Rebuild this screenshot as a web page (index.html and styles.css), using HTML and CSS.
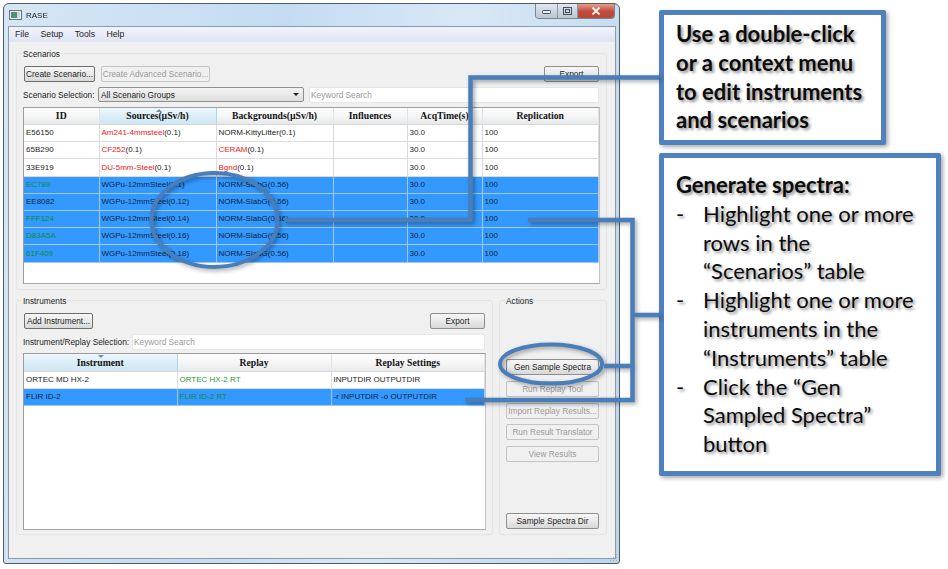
FILE: index.html
```html
<!DOCTYPE html>
<html lang="en">
<head>
  <meta charset="UTF-8"/>
  <title>RASE</title>
  <link rel="stylesheet" href="styles.css">
</head>
<body>
<div class="page">
  <div class="window">
    <div class="titlebar">
      <svg class="app-icon" width="13" height="10" viewBox="0 0 13 10">
        <rect x="0.5" y="0.5" width="12" height="9" fill="#e8eef0" stroke="#6b7478"/>
        <rect x="2" y="2" width="6" height="6" fill="#4f8f78"/>
        <rect x="8" y="2" width="3" height="6" fill="#cfd8dc"/>
      </svg>
      <span class="app-name">RASE</span>
      <div class="controls">
        <span class="ctl ctl-min"><svg width="10" height="6" viewBox="0 0 10 6"><rect x="0.5" y="2.5" width="8" height="3" rx="1" fill="#e8eef4" stroke="#46505a"/></svg></span>
        <span class="ctl ctl-max"><svg width="10" height="8" viewBox="0 0 10 8"><rect x="0.5" y="0.5" width="8" height="7" fill="none" stroke="#46505a"/><rect x="2.5" y="2.5" width="4" height="3" fill="none" stroke="#46505a"/></svg></span>
        <span class="ctl ctl-close"><svg width="10" height="8" viewBox="0 0 10 8"><path d="M1.5 0.5 L8.5 7.5 M8.5 0.5 L1.5 7.5" stroke="#f4f0ee" stroke-width="2"/></svg></span>
      </div>
    </div>

    <div class="client">
      <div class="menubar">
        <span>File</span><span>Setup</span><span>Tools</span><span>Help</span>
      </div>

      <div class="panels">
        <fieldset class="group group-scenarios">
          <legend>Scenarios</legend>
          <div class="row-buttons">
            <button class="btn btn-focus btn-create">Create Scenario...</button>
            <button class="btn btn-off btn-advanced">Create Advanced Scenario...</button>
            <button class="btn btn-export">Export</button>
          </div>
          <div class="row-filter">
            <label>Scenario Selection:</label>
            <div class="combo"><span>All Scenario Groups</span><i class="combo-arrow"></i></div>
            <div class="search">Keyword Search</div>
          </div>
          <div class="table-frame frame-scenarios">
            <table class="grid">
              <colgroup>
                <col class="sc-id"><col class="sc-src"><col class="sc-bg"><col class="sc-inf"><col class="sc-acq"><col>
              </colgroup>
              <thead>
                <tr><th>ID</th><th class="sorted"><i class="sort-up"></i>Sources(µSv/h)</th><th>Backgrounds(µSv/h)</th><th>Influences</th><th>AcqTime(s)</th><th>Replication</th></tr>
              </thead>
              <tbody>
                <tr><td>E56150</td><td><span class="red">Am241-4mmsteel</span>(0.1)</td><td>NORM-KittyLitter(0.1)</td><td></td><td>30.0</td><td>100</td></tr>
                <tr><td>65B290</td><td><span class="red">CF252</span>(0.1)</td><td><span class="red">CERAM</span>(0.1)</td><td></td><td>30.0</td><td>100</td></tr>
                <tr class="tall"><td>33E919</td><td><span class="red">DU-5mm-Steel</span>(0.1)</td><td><span class="red">Bgnd</span>(0.1)</td><td></td><td>30.0</td><td>100</td></tr>
                <tr class="sel"><td class="green">EC789</td><td>WGPu-12mmSteel(0.1)</td><td>NORM-SlabG(0.56)</td><td></td><td>30.0</td><td>100</td></tr>
                <tr class="sel"><td>EE8082</td><td>WGPu-12mmSteel(0.12)</td><td>NORM-SlabG(0.56)</td><td></td><td>30.0</td><td>100</td></tr>
                <tr class="sel"><td class="green">FFF124</td><td>WGPu-12mmSteel(0.14)</td><td>NORM-SlabG(0.56)</td><td></td><td>30.0</td><td>100</td></tr>
                <tr class="sel"><td class="green">D83A5A</td><td>WGPu-12mmSteel(0.16)</td><td>NORM-SlabG(0.56)</td><td></td><td>30.0</td><td>100</td></tr>
                <tr class="sel tall"><td class="green">61F409</td><td>WGPu-12mmSteel(0.18)</td><td>NORM-SlabG(0.56)</td><td></td><td>30.0</td><td>100</td></tr>
              </tbody>
            </table>
          </div>
        </fieldset>

        <div class="lower">
          <fieldset class="group group-instruments">
            <legend>Instruments</legend>
            <div class="row-buttons">
              <button class="btn btn-focus btn-add">Add Instrument...</button>
              <button class="btn btn-export">Export</button>
            </div>
            <div class="row-filter">
              <label>Instrument/Replay Selection:</label>
              <div class="search">Keyword Search</div>
            </div>
            <div class="table-frame frame-instruments">
              <table class="grid">
                <colgroup><col class="in-name"><col class="in-replay"><col></colgroup>
                <thead>
                  <tr><th class="sorted"><i class="sort-down"></i>Instrument</th><th>Replay</th><th>Replay Settings</th></tr>
                </thead>
                <tbody>
                  <tr><td>ORTEC MD HX-2</td><td class="green">ORTEC HX-2 RT</td><td>INPUTDIR OUTPUTDIR</td></tr>
                  <tr class="sel"><td>FLIR ID-2</td><td class="green">FLIR ID-2 RT</td><td>-r INPUTDIR -o OUTPUTDIR</td></tr>
                </tbody>
              </table>
            </div>
          </fieldset>

          <fieldset class="group group-actions">
            <legend>Actions</legend>
            <div class="actions">
              <button class="btn">Gen Sample Spectra</button>
              <button class="btn btn-off">Run Replay Tool</button>
              <button class="btn btn-off">Import Replay Results...</button>
              <button class="btn btn-off">Run Result Translator</button>
              <button class="btn btn-off">View Results</button>
              <button class="btn btn-dir">Sample Spectra Dir</button>
            </div>
          </fieldset>
        </div>
      </div>
    </div>
    <svg class="grip" width="8" height="8" viewBox="0 0 8 8" fill="#a9b0b6">
      <rect x="6" y="0" width="1" height="1"/><rect x="3" y="3" width="1" height="1"/><rect x="6" y="3" width="1" height="1"/>
      <rect x="0" y="6" width="1" height="1"/><rect x="3" y="6" width="1" height="1"/><rect x="6" y="6" width="1" height="1"/>
    </svg>
  </div>

  <div class="callouts">
    <div class="callout callout-edit">
      Use a double-click<br>or a context menu<br>to edit instruments<br>and scenarios
    </div>
    <div class="callout callout-gen">
      <p class="callout-head">Generate spectra:</p>
      <ul>
        <li><span class="dash">-</span><span>Highlight one or more<br>rows in the<br>“Scenarios” table</span></li>
        <li><span class="dash">-</span><span>Highlight one or more<br>instruments in the<br>“Instruments” table</span></li>
        <li><span class="dash">-</span><span>Click the “Gen<br>Sampled Spectra”<br>button</span></li>
      </ul>
    </div>
  </div>

  <!-- connector lines and the two rings drawn on top of the screenshot -->
  <svg class="overlay" width="948" height="569" viewBox="0 0 948 569" fill="none" stroke="#4a7ebb">
    <ellipse cx="214.5" cy="220" rx="63" ry="47" stroke-width="4"/>
    <ellipse cx="551" cy="364" rx="51" ry="19.5" stroke-width="4"/>
    <path d="M659 77.5 H470.5 V220 H284" stroke-width="4.5"/>
    <path d="M528 220 H632.5 V400 H465" stroke-width="4.5"/>
    <path d="M604 366 H632 M632 315 H659" stroke-width="4.5"/>
  </svg>
</div>
</body>
</html>
```

FILE: styles.css
```css
html, body {
    margin: 0;
    padding: 0;
    background: #ffffff;
}

.page {
    position: relative;
    width: 948px;
    height: 569px;
    overflow: hidden;
    font-family: "Liberation Sans", sans-serif;
    font-size: 8.3px;
    color: #1c1c1c;
}

/* window frame */
.window {
    position: absolute;
    left: 3px;
    top: 3px;
    width: 617px;
    height: 561px;
    display: flex;
    flex-direction: column;
    padding: 0 3px 4px 4px;
    box-sizing: border-box;
    border: 1px solid #555a60;
    border-radius: 6px 6px 3px 3px;
    background: linear-gradient(100deg, #d6e6f4 0%, #c4dcf2 40%, #d8e8f6 65%, #bcd6ee 100%);
    filter: blur(0.3px);
}

.titlebar {
    height: 22px;
    flex: none;
    display: flex;
    align-items: center;
    font-size: 8px;
    color: #222;
}

.app-icon {
    margin: 0 4px 0 1px;
}

.controls {
    display: flex;
    align-self: flex-start;
    margin-left: auto;
    margin-right: 1px;
    height: 14px;
    border: 1px solid #7a8590;
    border-top: none;
    border-radius: 0 0 4px 4px;
    overflow: hidden;
}

.ctl {
    display: flex;
    align-items: center;
    justify-content: center;
    height: 14px;
    width: 21px;
    border-right: 1px solid #8e98a2;
    background: linear-gradient(#dfe8f1, #b9c6d3);
}

.ctl-max {
    width: 19px;
}

.ctl-close {
    width: 36px;
    border-right: none;
    background: linear-gradient(#e0a090, #c1493a 55%, #b84838);
}

.client {
    flex: 1;
    display: flex;
    flex-direction: column;
    background: #f0f0f0;
    border: 1px solid #8d99a5;
    min-height: 0;
}

.menubar {
    height: 14px;
    flex: none;
    display: flex;
    align-items: center;
    gap: 11.5px;
    padding-left: 6px;
    font-size: 8.7px;
    background: linear-gradient(#f2f4fb, #dfe4f4);
    border-bottom: 1px solid #e4e4ec;
}

.panels {
    flex: 1;
    display: flex;
    flex-direction: column;
    gap: 10px;
    padding: 11px 8px 23px 7px;
    min-height: 0;
}

/* group boxes */
.group {
    margin: 0;
    padding: 0;
    position: relative;
    border: 1px solid #e4e4e4;
    border-radius: 3px;
    box-sizing: border-box;
    min-width: 0;
}

.group legend {
    position: absolute;
    top: -5px;
    left: 5px;
    padding: 0 1px;
    line-height: 10px;
    background: #f0f0f0;
}

.group-scenarios {
    height: 237px;
    flex: none;
    padding: 12px 6px 6px;
}

.lower {
    flex: 1;
    display: flex;
    gap: 6px;
    min-height: 0;
}

.group-instruments {
    width: 477px;
    flex: none;
    padding: 12px 6px 5px;
}

.group-actions {
    flex: 1;
    padding: 58px 7px 6px 6px;
}

.row-buttons {
    display: flex;
    gap: 6px;
    height: 16px;
    margin: 0 1px;
}

.row-filter {
    display: flex;
    align-items: center;
    height: 15px;
    margin: 5px 1px 0 0;
    white-space: nowrap;
}

.row-filter label {
    width: 75px;
    flex: none;
}

.group-instruments .row-filter label {
    width: 109px;
}

/* buttons */
.btn {
    height: 16px;
    padding: 0;
    font: inherit;
    color: #1c1c1c;
    white-space: nowrap;
    border: 1px solid #8f8f8f;
    border-radius: 2px;
    background: linear-gradient(#f6f6f6 0%, #eaeaea 50%, #d8d8d8 100%);
    box-sizing: border-box;
}

.btn-off {
    color: #9a9a9a;
    border-color: #c4c4c4;
    background: #f0f0f0;
}

.btn-focus {
    border-color: #6e6e6e;
}

.btn-create {
    width: 71px;
}

.btn-advanced {
    width: 109px;
}

.btn-add {
    width: 69px;
}

.btn-export {
    width: 55px;
    margin-left: auto;
}

.combo {
    width: 206px;
    height: 15px;
    flex: none;
    display: flex;
    align-items: center;
    justify-content: space-between;
    padding: 0 2px;
    box-sizing: border-box;
    border: 1px solid #8f8f8f;
    border-radius: 2px;
    background: linear-gradient(#f4f4f4, #dedede);
}

.combo-arrow {
    width: 0;
    height: 0;
    margin-right: 2px;
    border-left: 3px solid transparent;
    border-right: 3px solid transparent;
    border-top: 3px solid #222;
}

.search {
    flex: 1;
    height: 14px;
    line-height: 14px;
    margin-left: 5px;
    padding-left: 1px;
    color: #9a9a9a;
    background: #fff;
    border: 1px solid #e6e6e6;
    border-radius: 2px;
}

.group-instruments .search {
    margin-left: 0;
}

/* tables */
.table-frame {
    margin-top: 5px;
    background: #fff;
    border: 1px solid #9c9c9c;
    border-right-color: #c4c4c4;
    border-bottom-color: #a8a8a8;
    box-sizing: border-box;
    height: 177px;
}

.frame-instruments {
    margin-top: 4px;
}

.grid {
    width: 100%;
    border-collapse: collapse;
    table-layout: fixed;
}

.grid th {
    position: relative;
    height: 16px;
    padding: 0;
    font-family: "Liberation Serif", serif;
    font-size: 9.7px;
    font-weight: bold;
    color: #111;
    background: linear-gradient(#fdfdfd, #f6f6f6 50%, #e6e8ea);
    border-right: 1px solid #dfe3e6;
    border-bottom: 1px solid #d8d8d8;
    box-sizing: border-box;
}

.frame-instruments th {
    height: 17px;
}

.grid th.sorted {
    background: linear-gradient(#eef7fc, #d8ebf6 60%, #d0e6f3);
    border-right-color: #a8d8f0;
}

.sort-up, .sort-down {
    position: absolute;
    left: 50%;
    top: 1px;
    margin-left: -2px;
    width: 0;
    height: 0;
    border-left: 3px solid transparent;
    border-right: 3px solid transparent;
}

.sort-up {
    border-bottom: 3px solid #6d93ad;
}

.sort-down {
    border-top: 3px solid #6d93ad;
}

.grid td {
    height: 17px;
    padding: 0 2px;
    font-size: 8px;
    overflow: hidden;
    white-space: nowrap;
    box-sizing: border-box;
    border-right: 1px solid #dcdcdc;
    border-bottom: 1px solid #dcdcdc;
}

.grid tr.tall td {
    height: 18px;
}

.grid tr.sel td {
    background: #3399ff;
    color: #10243c;
    border-color: #a0c8ee;
}

.grid td.green {
    color: #1f9a38;
}

.grid tr.sel td.green {
    color: #0f8a3c;
}

.red {
    color: #f01818;
}

.sc-id { width: 75px; }
.sc-src { width: 117px; }
.sc-bg { width: 117px; }
.sc-inf { width: 74px; }
.sc-acq { width: 75px; }

.in-name { width: 153px; }
.in-replay { width: 154px; }

.actions {
    display: flex;
    flex-direction: column;
    gap: 5.75px;
    height: 170px;
}

.actions .btn {
    height: 16px;
}

.actions .btn-dir {
    margin-top: auto;
}

.grip {
    position: absolute;
    right: 1px;
    bottom: 1px;
}

/* annotation boxes */
.callouts {
    position: absolute;
    left: 659px;
    top: 10px;
    display: flex;
    flex-direction: column;
    gap: 8px;
    font-family: Lato, sans-serif;
    font-size: 22px;
    line-height: 28.8px;
    color: #0c0c0c;
    text-shadow: 2px 2px 3px rgba(0, 0, 0, 0.45);
}

.callout {
    background: #fff;
    border: 5px solid #4f81bd;
    border-radius: 2px;
    box-sizing: border-box;
    box-shadow: 2px 2px 4px rgba(0, 0, 0, 0.35);
    padding-left: 12px;
    white-space: nowrap;
}

.callout-edit {
    width: 227px;
    height: 135px;
    padding-top: 5px;
    font-weight: bold;
}

.callout-gen {
    width: 282px;
    height: 323px;
    padding-top: 13px;
}

.callout-head {
    margin: 0;
    font-weight: bold;
}

.callout-gen ul {
    list-style: none;
    margin: 0;
    padding: 0;
}

.callout-gen li {
    display: flex;
}

.dash {
    width: 27px;
    flex: none;
}

.overlay {
    position: absolute;
    left: 0;
    top: 0;
    filter: drop-shadow(2px 2px 2px rgba(0, 0, 0, 0.35));
}
```
